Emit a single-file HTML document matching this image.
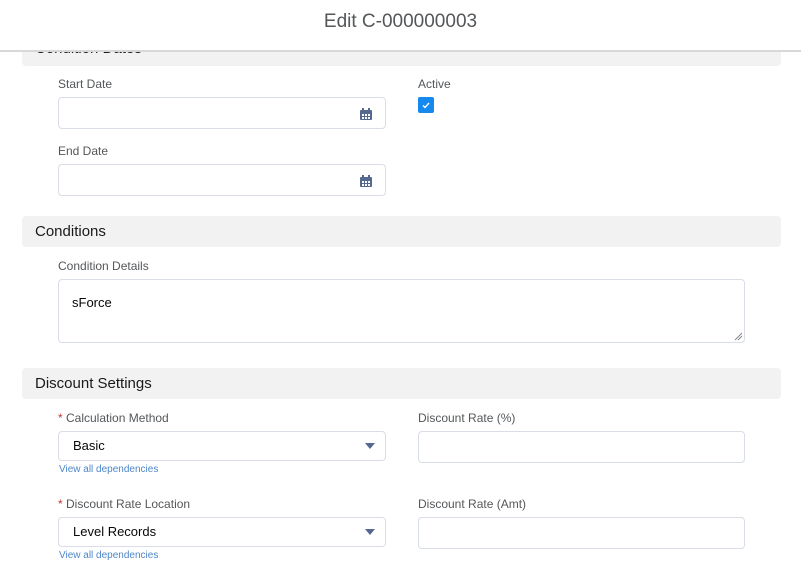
<!DOCTYPE html>
<html><head><style>
body{margin:0;width:801px;height:575px;overflow:hidden;background:#fff;font-family:"Liberation Sans",sans-serif;position:relative;color:#3e3e3c}
.a{position:absolute}
.hdr{left:0;top:0;width:801px;height:50px;background:#fff;border-bottom:2px solid #d8d8d8;z-index:2;text-align:center;line-height:44px;font-size:19px;color:#54575a}
.bar{left:22px;width:759px;height:31px;background:#f3f2f2;border-radius:4px;font-size:15px;line-height:31px;padding-left:13px;box-sizing:border-box;color:#1a1a1a}
.lbl{font-size:12px;color:#54575a}
.in{border:1px solid #d8dde6;border-radius:4px;background:#fff;box-sizing:border-box}
.sel{font-size:13px;line-height:28px;padding-left:14px;color:#080707}
.lnk{font-size:10px;color:#4d86c9}
.req{color:#c23934}
.tri{width:0;height:0;border-left:5px solid transparent;border-right:5px solid transparent;border-top:6px solid #54698d}
</style></head><body>
<div class="a hdr">Edit C-000000003</div>
<div class="a bar" style="top:35px;line-height:28px">Condition Dates</div>

<div class="a lbl" style="left:58px;top:77px">Start Date</div>
<div class="a in" style="left:58px;top:97px;width:328px;height:32px"></div>
<svg class="a" style="left:359px;top:107px" width="14" height="14" viewBox="0 0 14 14"><rect x="1" y="3" width="12" height="10" rx="1" fill="#54698d"/><rect x="3" y="1" width="2" height="3" fill="#54698d"/><rect x="9" y="1" width="2" height="3" fill="#54698d"/><g fill="#fff"><rect x="3" y="7" width="2" height="2"/><rect x="6" y="7" width="2" height="2"/><rect x="9" y="7" width="2" height="2"/><rect x="3" y="10" width="2" height="2"/><rect x="6" y="10" width="2" height="2"/><rect x="9" y="10" width="2" height="2"/></g></svg>
<div class="a lbl" style="left:418px;top:77px">Active</div>
<div class="a" style="left:418px;top:97px;width:16px;height:16px;background:#1589ee;border-radius:2px"></div>
<svg class="a" style="left:418px;top:97px" width="16" height="16"><path d="M5 8.5l2 2 4-4.5" stroke="#fff" stroke-width="1.4" fill="none"/></svg>

<div class="a lbl" style="left:58px;top:144px">End Date</div>
<div class="a in" style="left:58px;top:164px;width:328px;height:32px"></div>
<svg class="a" style="left:359px;top:174px" width="14" height="14" viewBox="0 0 14 14"><rect x="1" y="3" width="12" height="10" rx="1" fill="#54698d"/><rect x="3" y="1" width="2" height="3" fill="#54698d"/><rect x="9" y="1" width="2" height="3" fill="#54698d"/><g fill="#fff"><rect x="3" y="7" width="2" height="2"/><rect x="6" y="7" width="2" height="2"/><rect x="9" y="7" width="2" height="2"/><rect x="3" y="10" width="2" height="2"/><rect x="6" y="10" width="2" height="2"/><rect x="9" y="10" width="2" height="2"/></g></svg>

<div class="a bar" style="top:216px">Conditions</div>
<div class="a lbl" style="left:58px;top:259px">Condition Details</div>
<div class="a in" style="left:58px;top:279px;width:687px;height:64px;font-size:13px;padding:15px 0 0 13px;color:#080707">sForce</div>
<svg class="a" style="left:734px;top:332px" width="9" height="9"><path d="M8 1L1 8M8 4L4 8" stroke="#888" stroke-width="1"/></svg>

<div class="a bar" style="top:368px">Discount Settings</div>
<div class="a lbl" style="left:58px;top:411px"><span class="req">*</span> Calculation Method</div>
<div class="a in sel" style="left:58px;top:431px;width:328px;height:30px">Basic</div>
<div class="a tri" style="left:365px;top:443px"></div>
<div class="a lnk" style="left:59px;top:464px">View all dependencies</div>
<div class="a lbl" style="left:418px;top:411px">Discount Rate (%)</div>
<div class="a in" style="left:418px;top:431px;width:327px;height:32px"></div>

<div class="a lbl" style="left:58px;top:497px"><span class="req">*</span> Discount Rate Location</div>
<div class="a in sel" style="left:58px;top:517px;width:328px;height:30px">Level Records</div>
<div class="a tri" style="left:365px;top:529px"></div>
<div class="a lnk" style="left:59px;top:550px">View all dependencies</div>
<div class="a lbl" style="left:418px;top:497px">Discount Rate (Amt)</div>
<div class="a in" style="left:418px;top:517px;width:327px;height:32px"></div>
</body></html>
